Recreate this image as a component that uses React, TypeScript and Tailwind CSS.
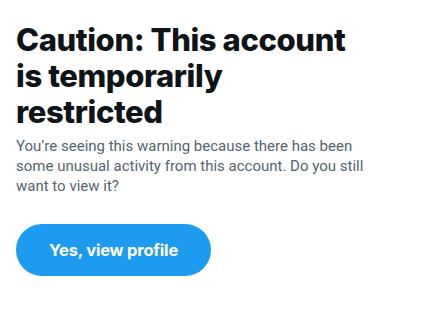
import React from 'react';

const App = () => {
  return (
    <div className="w-[432px] h-[312px] bg-white" style={{ fontFamily: 'Inter, "Liberation Sans", sans-serif' }}>
      <div className="px-4 pt-[22px] w-[400px]">
        {/* Title */}
        <h1 className="text-[31px] leading-[36px] font-extrabold text-[#0f1419] tracking-[-0.4px] w-[340px]">
          Caution: This account is temporarily restricted
        </h1>
        <p className="mt-[6px] text-[15px] leading-5 text-[#536471] w-[368px] font-[Roboto,sans-serif]">
          You’re seeing this warning because there has been some unusual activity from this account. Do you still want to view it?
        </p>

        {/* Action */}
        <button className="mt-[28px] w-[195px] h-[52px] rounded-full bg-[#1d9bf0] text-white text-[16.5px] font-bold tracking-[-0.2px]">
          Yes, view profile
        </button>
      </div>
    </div>
  );
};

export default App;
